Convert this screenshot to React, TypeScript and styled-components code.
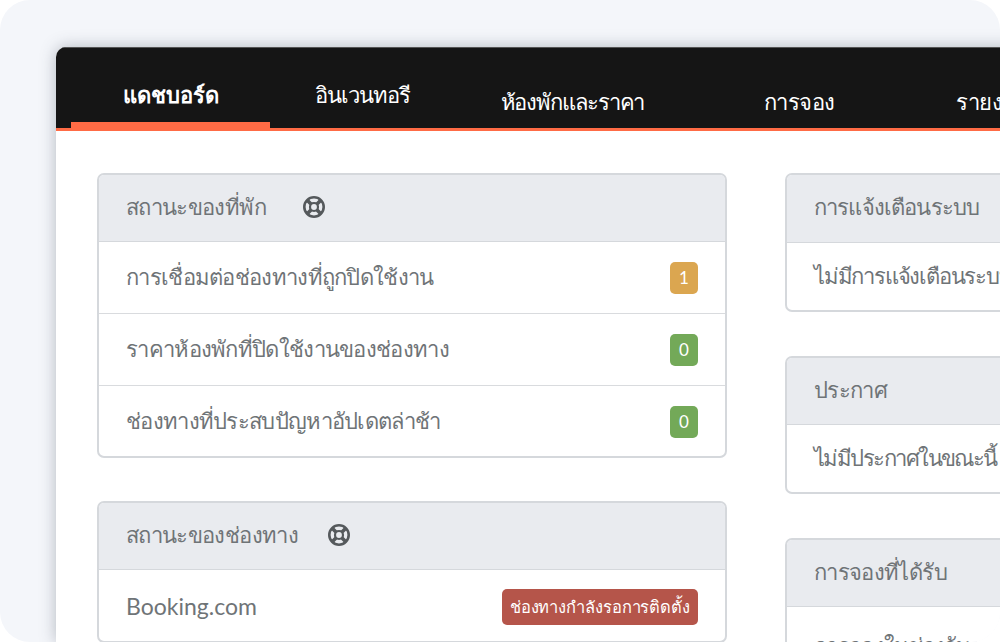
import React from "react";
import styled, { createGlobalStyle } from "styled-components";

const Global = createGlobalStyle`
  html, body { margin: 0; padding: 0; background: #fff; }
  body { font-family: Lato, "Noto Sans", sans-serif; }
`;

const Frame = styled.div`
  width: 1000px;
  height: 642px;
  box-sizing: border-box;
  padding: 47px 0 0 56px;
  background: #f4f6fa;
  border-radius: 30px;
  overflow: hidden;
`;

const Window = styled.div`
  width: 1000px;
  height: 595px;
  background: #fff;
  border-radius: 10px 0 0 0;
  overflow: hidden;
  box-shadow: 0 0 16px rgba(60, 70, 85, 0.35);
`;

const Nav = styled.nav`
  display: flex;
  height: 84px;
  box-sizing: border-box;
  padding-left: 15px;
  background: #151515;
  border-top: 1px solid #555;
  border-bottom: 3px solid #ff6b45;
`;

const Tab = styled.div<{ $w: number; $top: number; $sp?: number; $active?: boolean }>`
  flex: none;
  width: ${(p) => p.$w}px;
  height: 80px;
  box-sizing: border-box;
  padding-top: ${(p) => p.$top}px;
  text-align: center;
  color: #fff;
  font-size: 22px;
  letter-spacing: ${(p) => p.$sp ?? 0}px;
  line-height: 30px;
  font-weight: ${(p) => (p.$active ? 700 : 400)};
  white-space: nowrap;
  border-bottom: ${(p) => (p.$active ? "6px solid #ff6b45" : "none")};
`;

const Content = styled.main`
  display: flex;
  gap: 58px;
  padding: 42px 0 0 41px;
`;

const Column = styled.div<{ $w: number; $gap: number }>`
  display: flex;
  flex-direction: column;
  flex: none;
  width: ${(p) => p.$w}px;
  gap: ${(p) => p.$gap}px;
`;

const Panel = styled.section`
  border: 2px solid #d5d8dc;
  border-radius: 7px;
  overflow: hidden;
  background: #fff;
`;

const Head = styled.header<{ $gap?: number; $h?: number; $sp?: number }>`
  display: flex;
  align-items: center;
  gap: ${(p) => p.$gap ?? 0}px;
  height: ${(p) => (p.$h ?? 66) - 2}px;
  padding: 0 0 2px 27px;
  background: #e9ebef;
  border-bottom: 1px solid #d5d8dc;
  color: #6f7477;
  font-size: 22px;
  letter-spacing: ${(p) => p.$sp ?? -0.65}px;
  white-space: nowrap;
`;

const Row = styled.div<{ $h?: number; $top?: number; $sp?: number }>`
  display: flex;
  align-items: center;
  justify-content: space-between;
  height: ${(p) => p.$h ?? 71}px;
  padding: ${(p) => p.$top ?? 0}px 27px 0;
  border-bottom: 1px solid #d9dbde;
  color: #6f7477;
  font-size: 22px;
  letter-spacing: ${(p) => p.$sp ?? -0.7}px;
  white-space: nowrap;
  &:last-child { border-bottom: none; }
`;

const Brand = styled.span`
  font-size: 23px;
  letter-spacing: 0;
`;

const Count = styled.span<{ $c: string }>`
  display: flex;
  align-items: center;
  justify-content: center;
  width: 28px;
  height: 32px;
  border-radius: 5px;
  background: ${(p) => p.$c};
  color: #fff;
  font-size: 17px;
  letter-spacing: 0;
`;

const Tag = styled.span`
  padding: 0 8px;
  height: 36px;
  line-height: 36px;
  margin-top: 2px;
  border-radius: 5px;
  background: #b5554a;
  color: #fff;
  font-size: 16.5px;
  letter-spacing: -0.1px;
`;

const RingIcon = styled.svg`
  flex: none;
  margin-top: -1px;
`;

const Ring = () => (
  <RingIcon width="22" height="22" viewBox="0 0 22 22" fill="none">
    <circle cx="11" cy="11" r="9.7" stroke="#55595c" strokeWidth="2.6" />
    <circle cx="11" cy="11" r="4" stroke="#55595c" strokeWidth="2.2" />
    <path d="M4 4l4.2 4.2M18 4l-4.2 4.2M4 18l4.2-4.2M18 18l-4.2-4.2" stroke="#55595c" strokeWidth="3.6" />
  </RingIcon>
);

export default function App() {
  return (
    <>
      <Global />
      <Frame>
        <Window>
          <Nav>
            <Tab $w={199} $top={32} $active>แดชบอร์ด</Tab>
            <Tab $w={185} $top={32} $sp={-0.95}>อินเวนทอรี</Tab>
            <Tab $w={235} $top={39} $sp={-1.1}>ห้องพักและราคา</Tab>
            <Tab $w={218} $top={39} $sp={-0.5}>การจอง</Tab>
            <Tab $w={168} $top={39} $sp={-0.5}>รายงาน</Tab>
          </Nav>
          <Content>
            <Column $w={630} $gap={43}>
              <Panel>
                <Head $gap={37}>สถานะของที่พัก<Ring /></Head>
                <Row>การเชื่อมต่อช่องทางที่ถูกปิดใช้งาน<Count $c="#dba650">1</Count></Row>
                <Row>ราคาห้องพักที่ปิดใช้งานของช่องทาง<Count $c="#73a958">0</Count></Row>
                <Row $h={69} $top={1}>ช่องทางที่ประสบปัญหาอัปเดตล่าช้า<Count $c="#73a958">0</Count></Row>
              </Panel>
              <Panel>
                <Head $gap={30}>สถานะของช่องทาง<Ring /></Head>
                <Row><Brand>Booking.com</Brand><Tag>ช่องทางกำลังรอการติดตั้ง</Tag></Row>
              </Panel>
            </Column>
            <Column $w={400} $gap={44}>
              <Panel>
                <Head $h={67} $sp={-0.85}>การแจ้งเตือนระบบ</Head>
                <Row $h={67} $sp={-1.2}>ไม่มีการแจ้งเตือนระบบในขณะนี้</Row>
              </Panel>
              <Panel>
                <Head>ประกาศ</Head>
                <Row $h={67} $sp={-1.55}>ไม่มีประกาศในขณะนี้</Row>
              </Panel>
              <Panel>
                <Head>การจองที่ได้รับ</Head>
                <Row $h={71} $top={4}>การจองในช่วงรับ</Row>
              </Panel>
            </Column>
          </Content>
        </Window>
      </Frame>
    </>
  );
}
